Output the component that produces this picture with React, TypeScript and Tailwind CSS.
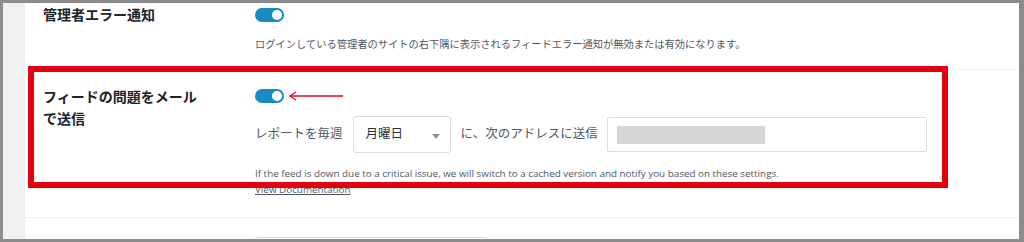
import React from "react";

const jp = "font-['Segoe_UI','Open_Sans','Noto_Sans_CJK_JP',sans-serif]";

function Toggle() {
  return (
    <div className="relative h-[14px] w-[29px] rounded-full bg-[#1a8ac4]">
      <div className="absolute right-[2px] top-[2px] h-[10px] w-[10px] rounded-full bg-white" />
    </div>
  );
}

export default function App() {
  return (
    <div
      className={`relative box-border h-[242px] w-[1024px] overflow-hidden border-t-[3px] border-l-[3px] border-r-[5px] border-b-[3px] border-[#8c8c8c] bg-white ${jp}`}
    >
      <div className="flex h-full">
        <div className="w-[22px] shrink-0 bg-[#f0f0f1]" />
        <div className="flex-1 bg-white">
          {/* Row 1 */}
          <div className="flex h-[67px] border-b border-[#f0f0f1] pl-[18px]">
            <div className="w-[212px] shrink-0">
              <div className="mt-[1px] text-[14px] font-bold leading-[22px] text-[#1d2327]">
                管理者エラー通知
              </div>
            </div>
            <div>
              <div className="mt-[5px]">
                <Toggle />
              </div>
              <div className="mt-[14px] text-[10.25px] leading-[16px] text-[#50575e]">
                ログインしている管理者のサイトの右下隅に表示されるフィードエラー通知が無効または有効になります。
              </div>
            </div>
          </div>
          {/* Row 2 */}
          <div className="flex h-[148px] border-b border-[#f0f0f1] pl-[18px]">
            <div className="w-[212px] shrink-0">
              <div className="mt-[16px] text-[14px] font-bold leading-[22px] text-[#1d2327]">
                フィードの問題をメール
                <br />
                で送信
              </div>
            </div>
            <div>
              <div className="mt-[19px]">
                <Toggle />
              </div>
              <div className="mt-[13px] flex h-[37px] items-center">
                <span className="text-[12.5px] text-[#50575e]">レポートを毎週</span>
                <div className="relative ml-[10px] flex h-[37px] w-[98px] items-center rounded-[3px] border border-[#dcdcde] bg-white pl-[12px]">
                  <span className="text-[12.5px] text-[#2c3338]">月曜日</span>
                  <svg
                    className="absolute left-[78px] top-[17px]"
                    width="8"
                    height="5"
                    viewBox="0 0 8 5"
                  >
                    <path d="M0 0 L8 0 L4 5 Z" fill="#8c8f94" />
                  </svg>
                </div>
                <span className="ml-[10px] text-[12.5px] text-[#50575e]">
                  に、次のアドレスに送信
                </span>
                <div className="ml-[9px] flex h-[35px] w-[320px] items-center rounded-[2px] border border-[#dcdcde] bg-white pl-[9px]">
                  <div className="h-[18px] w-[148px] bg-[#d6d6d6]" />
                </div>
              </div>
              <div className="mt-[12px] text-[9.85px] leading-[16px] text-[#50575e]">
                If the feed is down due to a critical issue, we will switch to a cached version and notify you based on these settings.
              </div>
              <div className="text-[9.85px] leading-[16px] text-[#50575e] underline">
                View Documentation
              </div>
            </div>
          </div>
          {/* Row 3 */}
          <div className="flex pl-[18px]">
            <div className="w-[212px] shrink-0" />
            <div className="mt-[19px] h-[30px] w-[232px] rounded-[3px] border border-[#dcdcde]" />
          </div>
        </div>
      </div>

      {/* Red annotation box */}
      <div className="pointer-events-none absolute left-[25px] top-[63px] h-[122px] w-[920px] border-[6px] border-[#e3000f]" />

      {/* Red arrow */}
      <svg
        className="pointer-events-none absolute left-[285px] top-[88px]"
        width="56"
        height="10"
        viewBox="0 0 56 10"
      >
        <path d="M2 5 H55" stroke="#d8101c" strokeWidth="1.3" fill="none" />
        <path d="M8 1 L2 5 L8 9" stroke="#d8101c" strokeWidth="1.3" fill="none" />
      </svg>
    </div>
  );
}
